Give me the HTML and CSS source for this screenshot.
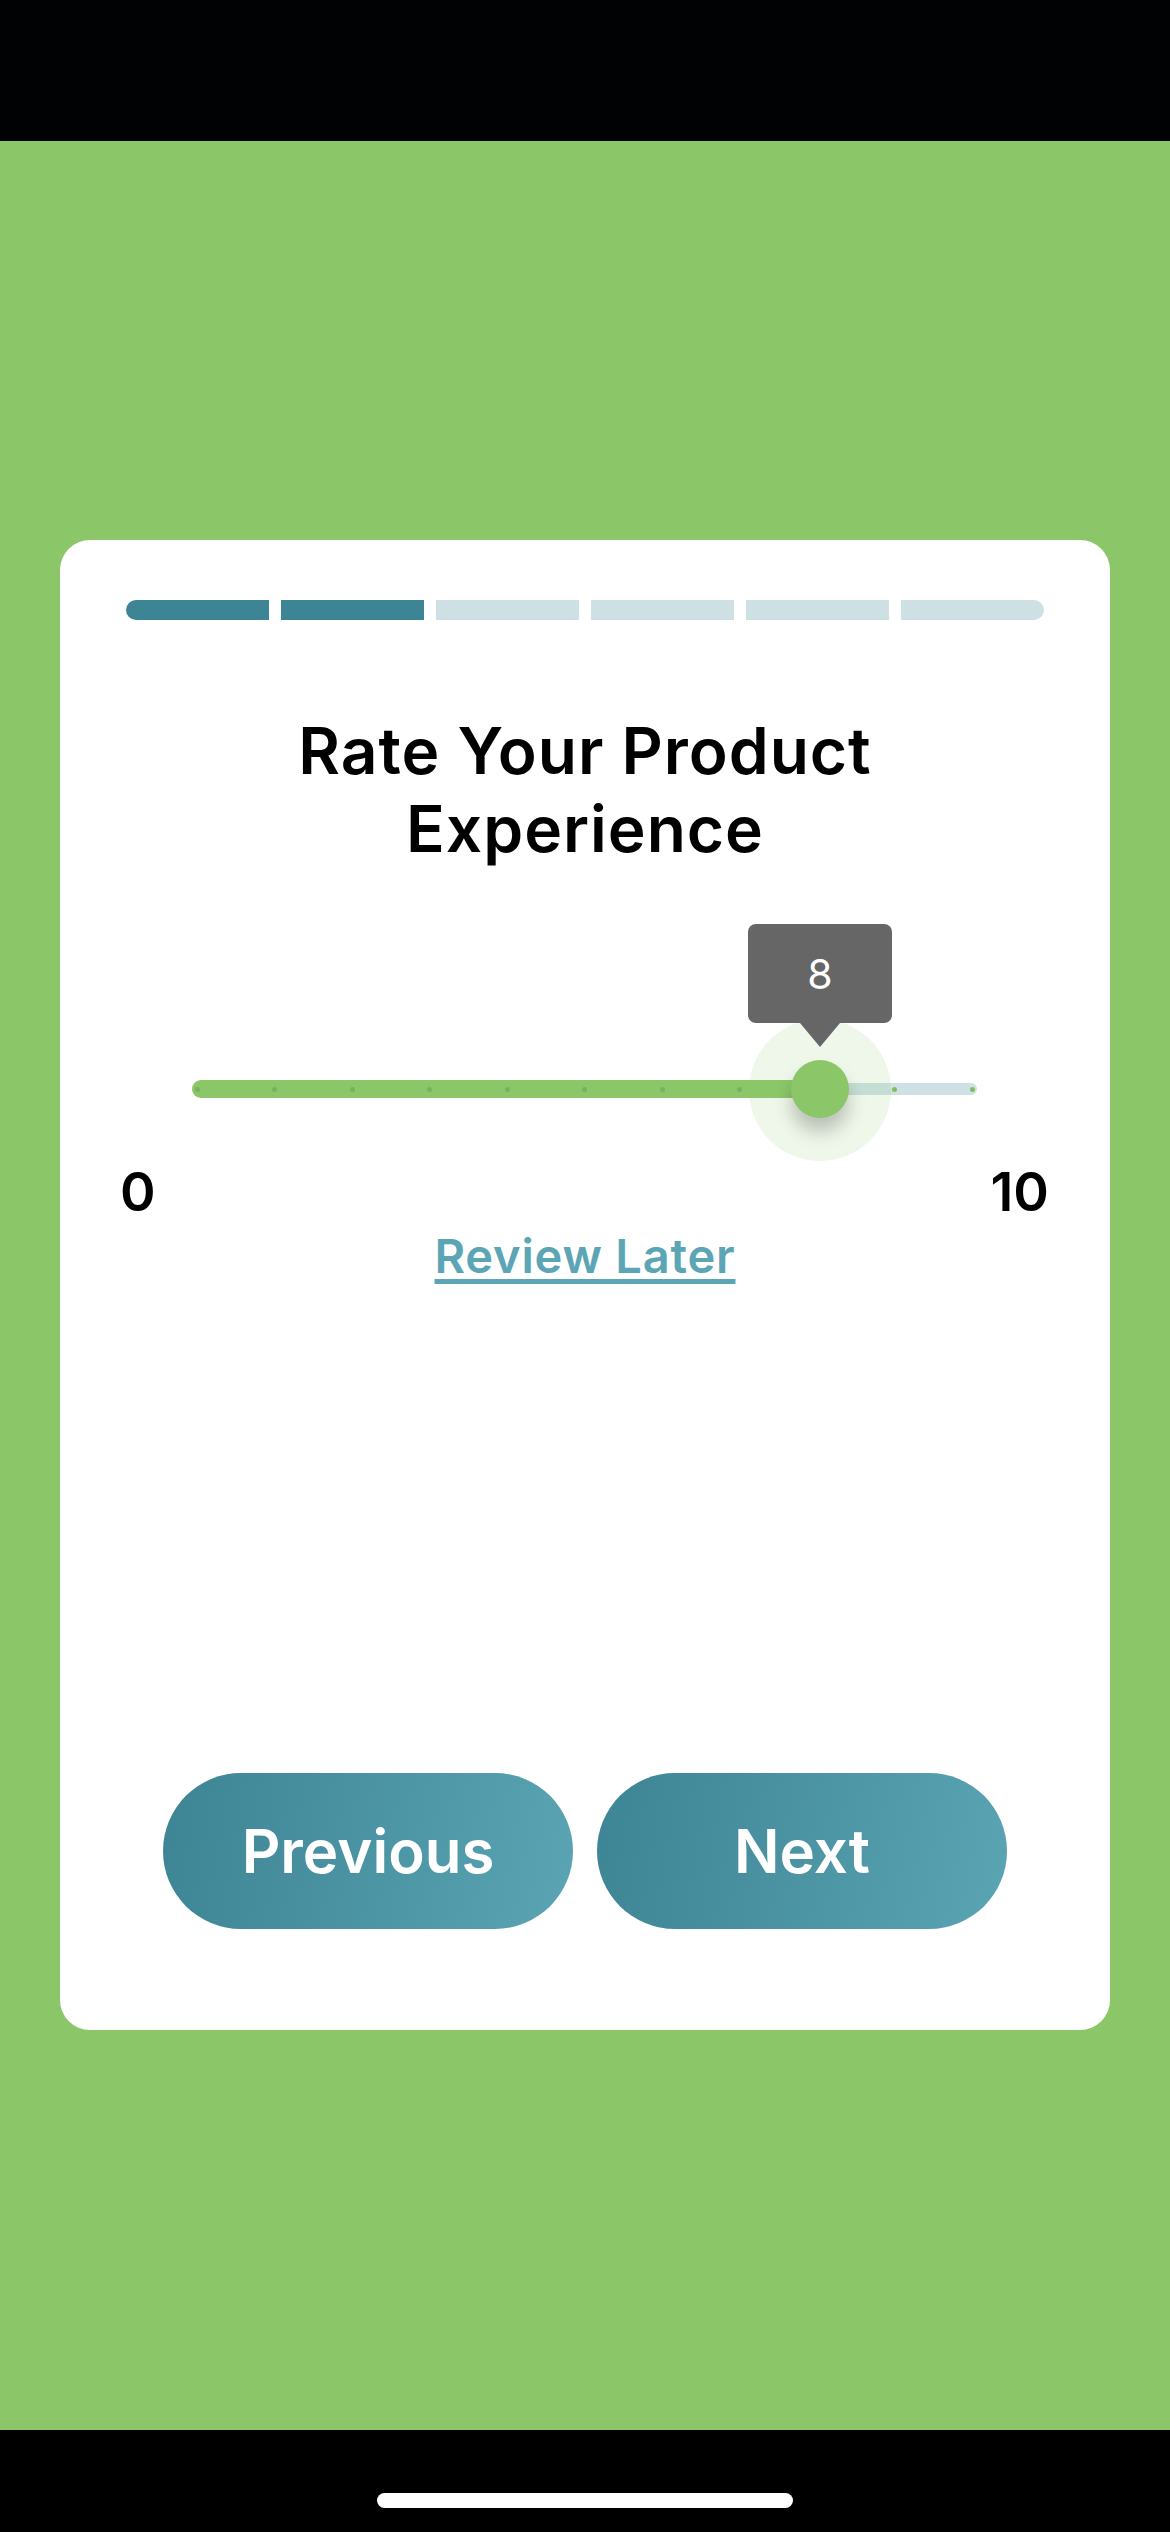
FILE: index.html
```html
<!DOCTYPE html>
<html lang="en">
<head>
<meta charset="utf-8">
<title>Rate Your Product Experience</title>
<link rel="stylesheet" href="styles.css">
</head>
<body>
<div class="phone">
  <div class="status-bar"></div>
  <main class="screen">
    <section class="card">
      <div class="progress">
        <span class="seg seg-done"></span>
        <span class="seg seg-done"></span>
        <span class="seg"></span>
        <span class="seg"></span>
        <span class="seg"></span>
        <span class="seg"></span>
      </div>
      <h1 class="title">Rate Your Product<br>Experience</h1>
      <div class="slider">
        <div class="track">
          <div class="track-fill" style="width:80%"></div>
          <div class="track-rest"></div>
          <div class="ticks">
            <span class="tick" style="left:0%"></span>
            <span class="tick" style="left:10%"></span>
            <span class="tick" style="left:20%"></span>
            <span class="tick" style="left:30%"></span>
            <span class="tick" style="left:40%"></span>
            <span class="tick" style="left:50%"></span>
            <span class="tick" style="left:60%"></span>
            <span class="tick" style="left:70%"></span>
            <span class="tick" style="left:80%"></span>
            <span class="tick tick-rest" style="left:90%"></span>
            <span class="tick tick-rest" style="left:100%"></span>
          </div>
          <div class="thumb-anchor" style="left:80%">
            <span class="halo"></span>
            <span class="thumb"></span>
            <span class="tooltip">8</span>
          </div>
        </div>
      </div>
      <div class="scale-labels"><span>0</span><span>10</span></div>
      <a class="review-later" href="#">Review Later</a>
      <div class="actions">
        <button class="btn" type="button">Previous</button>
        <button class="btn" type="button">Next</button>
      </div>
    </section>
  </main>
  <div class="home-bar"><span class="home-indicator"></span></div>
</div>
</body>
</html>
```
FILE: styles.css
```css
* { box-sizing: border-box; }
html, body { margin: 0; padding: 0; }
body {
  font-family: Inter, "Noto Sans", "Liberation Sans", sans-serif;
  background: #000;
}
.phone {
  width: 1170px;
  height: 2532px;
  display: flex;
  flex-direction: column;
}
.status-bar {
  height: 141px;
  background: #010203;
  flex: none;
}
.screen {
  flex: 1;
  background: #8bc769;
  padding-top: 399px;
}
.card {
  margin: 0 60px;
  height: 1490px;
  background: #fff;
  border-radius: 30px;
  padding-top: 60px;
  display: flex;
  flex-direction: column;
}
.progress {
  display: flex;
  gap: 11.5px;
  margin: 0 66px;
  height: 20px;
}
.seg {
  flex: 1;
  background: #cfe0e5;
}
.seg-done { background: #3d8494; }
.seg:first-child { border-radius: 10px 0 0 10px; }
.seg:last-child { border-radius: 0 10px 10px 0; }

.title {
  margin: 92px 0 0;
  font-size: 64px;
  font-weight: 600;
  line-height: 78px;
  text-align: center;
  color: #000;
  letter-spacing: 1px;
}

.slider {
  margin: 56px 133px 0 132px;
  height: 236px;
}
.track {
  position: relative;
  margin-top: 156px;
  height: 18px;
  display: flex;
  align-items: center;
}
.track-fill {
  height: 18px;
  background: #8bc769;
  border-radius: 9px 0 0 9px;
}
.track-rest {
  flex: 1;
  height: 12px;
  background: #d0e1e5;
  border-radius: 0 6px 6px 0;
}
.ticks {
  position: absolute;
  top: 0;
  bottom: 0;
  left: 5px;
  right: 5px;
}
.tick {
  position: absolute;
  top: 50%;
  width: 5px;
  height: 5px;
  margin: -2.5px 0 0 -2.5px;
  border-radius: 50%;
  background: #78b25e;
}
.tick-rest { background: #7fbf63; }

.thumb-anchor {
  position: absolute;
  top: 9px;
  width: 0;
  height: 0;
}
.halo {
  position: absolute;
  left: -71px;
  top: -70px;
  width: 142px;
  height: 142px;
  border-radius: 50%;
  background: rgba(139, 199, 105, 0.14);
}
.thumb {
  position: absolute;
  left: -29px;
  top: -29px;
  width: 58px;
  height: 58px;
  border-radius: 50%;
  background: #8bc769;
  box-shadow: 0 14px 18px rgba(0, 0, 0, 0.22);
}
.tooltip {
  position: absolute;
  left: -72px;
  top: -165px;
  width: 144px;
  height: 99px;
  border-radius: 8px;
  background: #666666;
  color: #fff;
  font-size: 41px;
  font-weight: 400;
  display: flex;
  align-items: center;
  justify-content: center;
}
.tooltip::after {
  content: "";
  position: absolute;
  left: 52px;
  bottom: -24px;
  border-left: 20px solid transparent;
  border-right: 20px solid transparent;
  border-top: 24px solid #666666;
}

.scale-labels {
  display: flex;
  justify-content: space-between;
  padding: 0 61px 0 60px;
  font-size: 54px;
  font-weight: 600;
  line-height: 64px;
  color: #000;
}

.review-later {
  align-self: center;
  margin-top: 4px;
  font-size: 47px;
  font-weight: 600;
  line-height: 56px;
  letter-spacing: 0.8px;
  color: #5ba5b5;
  text-decoration: underline;
  text-decoration-thickness: 5px;
  text-underline-offset: 6px;
}

.actions {
  margin-top: auto;
  padding-bottom: 101px;
  display: flex;
  justify-content: center;
  gap: 24px;
}
.btn {
  width: 410px;
  height: 156px;
  border: 0;
  border-radius: 78px;
  background: linear-gradient(100deg, #3d8494 0%, #5aa4b3 100%);
  color: #fff;
  font-family: inherit;
  font-size: 60px;
  font-weight: 600;
  padding: 0;
}

.home-bar {
  height: 102px;
  background: #000;
  flex: none;
  display: flex;
  justify-content: center;
  padding-top: 63px;
}
.home-indicator {
  width: 416px;
  height: 15px;
  border-radius: 8px;
  background: #fff;
}
```
